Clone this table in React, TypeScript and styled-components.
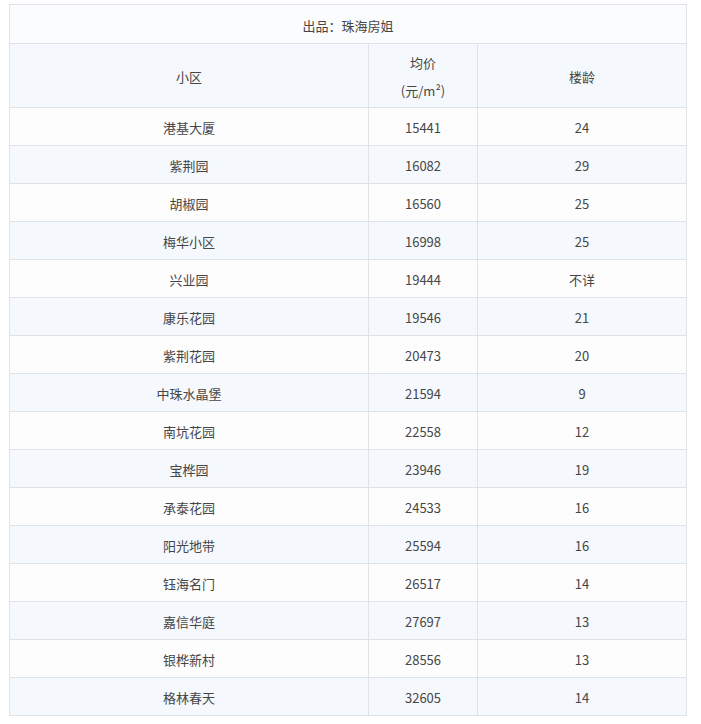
import React from "react";
import styled, { createGlobalStyle } from "styled-components";

const Global = createGlobalStyle`
  html, body { margin: 0; padding: 0; background: #fff; }
  body { font-family: "Noto Sans CJK SC", "Noto Sans", sans-serif; }
`;

const Wrap = styled.div`
  padding: 4px 0 0 9px;
`;

const Table = styled.table`
  border-collapse: collapse;
  width: 677px;
  table-layout: fixed;
  font-size: 13px;
  color: #464646;
`;

const Cell = styled.td<{ $h: number }>`
  border: 1px solid #dfe2e6;
  text-align: center;
  vertical-align: middle;
  height: ${(p) => p.$h}px;
  padding: 2px 0 0;
  box-sizing: border-box;
`;

const Row = styled.tr<{ $alt?: boolean; $title?: boolean }>`
  background: ${(p) => (p.$title ? "#fbfcfd" : p.$alt ? "#f5f8fc" : "#fdfdfe")};
`;

const HeadLine = styled.div`
  line-height: 28px;
`;

const data: [string, string, string][] = [
  ["港基大厦", "15441", "24"],
  ["紫荆园", "16082", "29"],
  ["胡椒园", "16560", "25"],
  ["梅华小区", "16998", "25"],
  ["兴业园", "19444", "不详"],
  ["康乐花园", "19546", "21"],
  ["紫荆花园", "20473", "20"],
  ["中珠水晶堡", "21594", "9"],
  ["南坑花园", "22558", "12"],
  ["宝桦园", "23946", "19"],
  ["承泰花园", "24533", "16"],
  ["阳光地带", "25594", "16"],
  ["钰海名门", "26517", "14"],
  ["嘉信华庭", "27697", "13"],
  ["银桦新村", "28556", "13"],
  ["格林春天", "32605", "14"],
];

export default function App() {
  return (
    <Wrap>
      <Global />
      <Table>
        <colgroup>
          <col style={{ width: 359 }} />
          <col style={{ width: 109 }} />
          <col style={{ width: 209 }} />
        </colgroup>
        <tbody>
          <Row $title>
            <Cell $h={39} colSpan={3}>出品：珠海房姐</Cell>
          </Row>
          <Row $alt>
            <Cell $h={64}>小区</Cell>
            <Cell $h={64}>
              <HeadLine>均价</HeadLine>
              <HeadLine>(元/m²)</HeadLine>
            </Cell>
            <Cell $h={64}>楼龄</Cell>
          </Row>
          {data.map(([n, p, a], i) => (
            <Row key={n} $alt={i % 2 === 1}>
              <Cell $h={38}>{n}</Cell>
              <Cell $h={38}>{p}</Cell>
              <Cell $h={38}>{a}</Cell>
            </Row>
          ))}
        </tbody>
      </Table>
    </Wrap>
  );
}
